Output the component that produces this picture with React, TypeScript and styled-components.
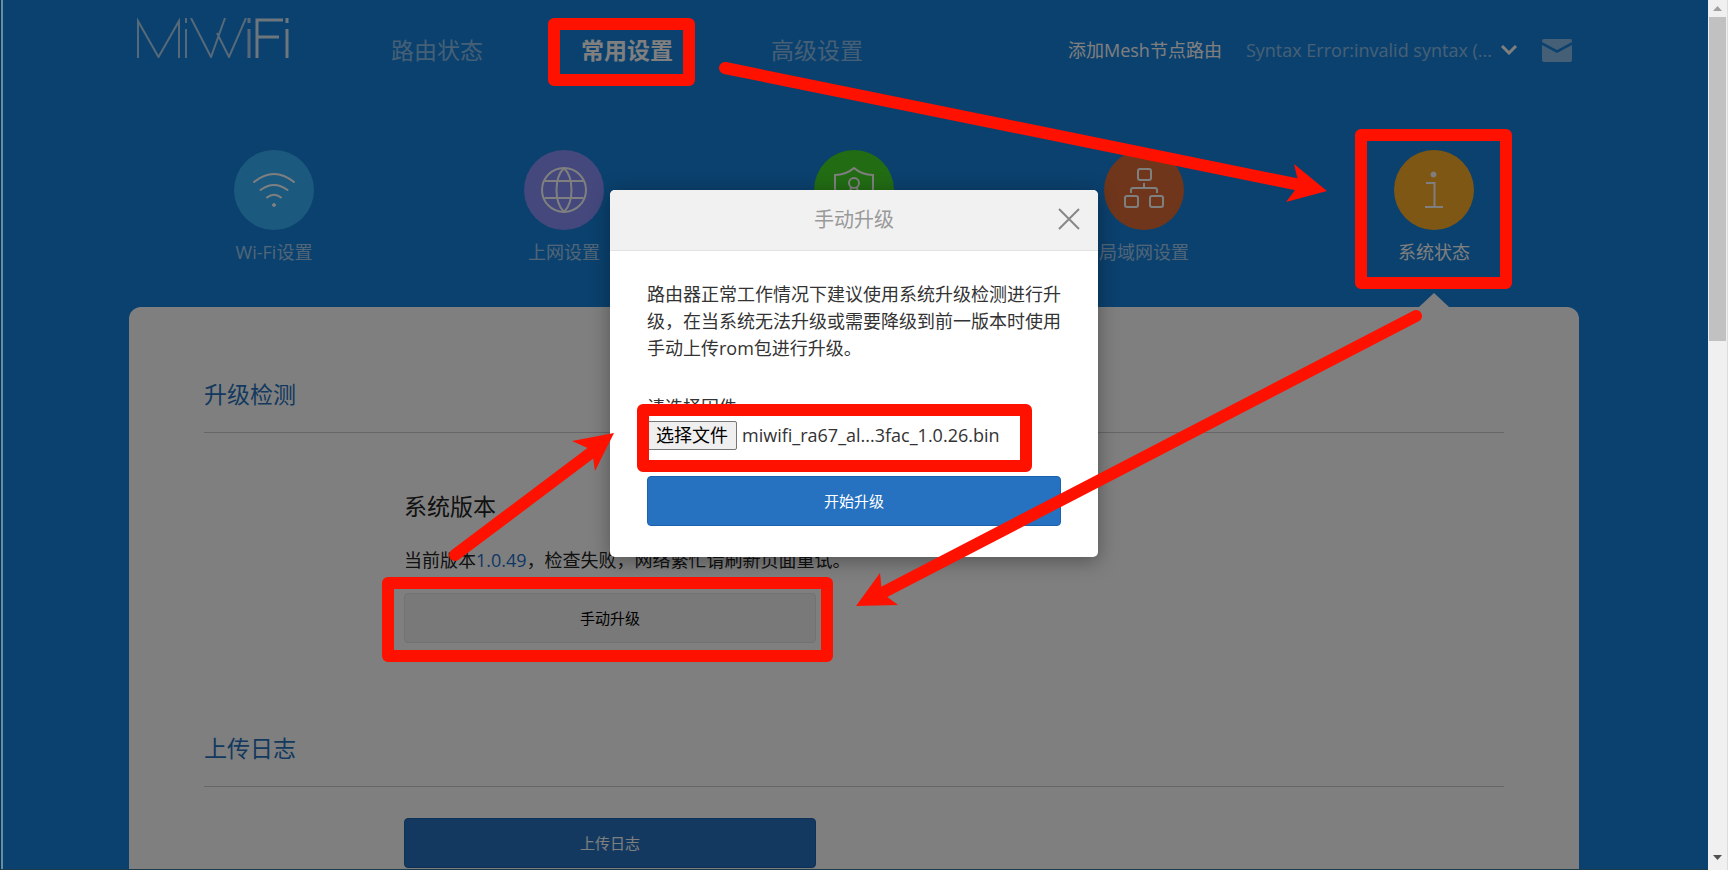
import React from 'react';
import styled, { createGlobalStyle } from 'styled-components';

const GlobalStyle = createGlobalStyle`
  * { box-sizing: border-box; }
  html, body { margin: 0; padding: 0; }
  body {
    background: #1682dc;
    color: #333;
    font-family: 'Open Sans', 'Noto Sans CJK SC', sans-serif;
    font-size: 18px;
    overflow: hidden;
  }
  button { font-family: inherit; cursor: pointer; }
  a { color: inherit; text-decoration: none; }
  h1, h2, h3, p { margin: 0; font-weight: 400; }
`;

const Window = styled.div`
  position: relative;
  display: flex;
  height: 100vh;
  overflow: hidden;
`;

const Viewport = styled.div`
  position: relative;
  flex: 1;
  min-width: 0;
  overflow: hidden;
  background: #1682dc;
`;

const Container = styled.div`
  width: 1450px;
  max-width: 100%;
  margin: 0 auto;
`;

const Header = styled.header`
  display: flex;
  align-items: center;
  height: 100px;
  padding: 0 7px 0 8px;
`;

const Logo = styled.a`
  display: block;
  height: 40px;
  margin-bottom: 24px;
`;

const Nav = styled.nav`
  display: flex;
  gap: 98px;
  margin-left: 100px;
`;

const NavLink = styled.a<{ $active?: boolean }>`
  font-size: 23px;
  line-height: 32px;
  white-space: nowrap;
  font-weight: ${p => (p.$active ? 700 : 400)};
  color: ${p => (p.$active ? '#fff' : 'rgba(255, 255, 255, 0.5)')};
`;

const Account = styled.div`
  display: flex;
  align-items: center;
  margin-left: auto;
  white-space: nowrap;
  line-height: 26px;
  color: #fff;
`;

const RouterButton = styled.button`
  display: flex;
  align-items: center;
  gap: 9px;
  margin: 0 25px 0 24px;
  padding: 0;
  border: 0;
  background: none;
  font-size: 18px;
  line-height: 26px;
  color: #fff;

  span { opacity: 0.5; }
`;

const MailLink = styled.a`
  display: flex;
`;

const Sections = styled.nav`
  display: grid;
  grid-template-columns: repeat(5, 1fr);
  margin-top: 50px;
`;

const SectionLink = styled.a<{ $active?: boolean }>`
  position: relative;
  display: flex;
  flex-direction: column;
  align-items: center;
  gap: 9px;
  height: 157px;
  line-height: 26px;
  color: ${p => (p.$active ? '#fff' : 'rgba(255, 255, 255, 0.6)')};

  &::after {
    content: '';
    display: ${p => (p.$active ? 'block' : 'none')};
    position: absolute;
    bottom: 0;
    border: 15px solid transparent;
    border-top-width: 0;
    border-bottom: 14px solid #fff;
  }
`;

const Disc = styled.span<{ $color: string }>`
  display: flex;
  width: 80px;
  height: 80px;
  border-radius: 50%;
  background: ${p => p.$color};
`;

const Panel = styled.main`
  padding: 67px 75px 80px;
  min-height: 900px;
  border-radius: 12px;
  background: #fff;
`;

const PanelSection = styled.section`
  margin-bottom: 85px;
`;

const SectionTitle = styled.h2`
  padding-bottom: 18px;
  border-bottom: 1px solid #ccc;
  font-size: 23px;
  line-height: 40px;
  color: #2672c0;
`;

const SectionBody = styled.div<{ $top: number }>`
  width: 412px;
  margin: ${p => p.$top}px 0 0 200px;
`;

const Subtitle = styled.h3`
  font-size: 23px;
  line-height: 32px;
  color: #222;
`;

const VersionLine = styled.p`
  margin: 25px 0 20px;
  line-height: 26px;
  white-space: nowrap;
  color: #222;

  b { font-weight: 400; color: #1c6fc8; }
`;

const Button = styled.button<{ $primary?: boolean }>`
  display: block;
  width: 100%;
  height: 50px;
  padding: 0;
  border: 1px solid ${p => (p.$primary ? '#1b62ae' : '#e4e4e4')};
  border-radius: 4px;
  background: ${p => (p.$primary ? '#2672c0' : '#f2f2f2')};
  font-size: 15px;
  line-height: 24px;
  color: ${p => (p.$primary ? '#fff' : '#000')};
`;

const Backdrop = styled.div`
  position: absolute;
  inset: 0;
  background: rgba(0, 0, 0, 0.5);
`;

const Dialog = styled.div`
  width: 488px;
  margin: 190px auto 0;
  border-radius: 5px;
  overflow: hidden;
  background: #fff;
  box-shadow: 0 4px 20px rgba(0, 0, 0, 0.35);
`;

const DialogHeader = styled.div`
  display: grid;
  grid-template-columns: 24px 1fr 24px;
  align-items: center;
  height: 61px;
  padding: 0 17px;
  border-bottom: 1px solid #e2e2e2;
  background: #f1f1f1;

  h2 {
    grid-column: 2;
    text-align: center;
    font-size: 20px;
    line-height: 28px;
    color: #999;
  }
`;

const CloseButton = styled.button`
  display: flex;
  padding: 0;
  border: 0;
  background: none;
`;

const DialogBody = styled.form`
  padding: 30px 37px 31px;
  line-height: 27px;
  color: #333;
`;

const FileField = styled.div`
  margin: 32px 0 26px;
`;

const FilePicker = styled.label`
  position: relative;
  display: flex;
  align-items: center;
  gap: 5px;
  line-height: 27px;
  white-space: nowrap;

  input {
    position: absolute;
    inset: 0;
    width: 100%;
    opacity: 0;
  }
`;

const FileButton = styled.span`
  padding: 0 8px;
  border: 1px solid #767676;
  border-radius: 2px;
  background: #efefef;
  color: #000;
`;

const Annotations = styled.svg`
  position: absolute;
  top: 0;
  left: 50%;
  margin-left: -854px;
  overflow: visible;
  pointer-events: none;
`;

const WindowEdge = styled.div`
  position: absolute;
  inset: 0 auto 0 0;
  width: 3px;
  border-left: 1px solid #14303c;
  background: #5c8fb0;
`;

const WindowFoot = styled.div`
  position: absolute;
  inset: auto 0 0 0;
  height: 1px;
  background: #1c3c4c;
`;

const Scrollbar = styled.div`
  display: flex;
  flex-direction: column;
  align-items: center;
  width: 20px;
  border-right: 1px solid #dcdcdc;
  background: #f0f0f0;
`;

const ScrollArrow = styled.span<{ $down?: boolean }>`
  display: flex;
  align-items: center;
  justify-content: center;
  height: 17px;
  margin-top: ${p => (p.$down ? 'auto' : '0')};
  margin-bottom: ${p => (p.$down ? '4px' : '0')};
`;

const ScrollThumb = styled.span`
  width: 17px;
  height: 324px;
  background: #c1c1c1;
`;

const line = { fill: 'none', stroke: '#fff', strokeWidth: 2 } as const;

const icons: Record<string, React.ReactNode> = {
  wifi: (
    <g {...line} strokeLinecap="round">
      <path d="M20 32Q40 16 60 32M26.500 40Q40 30 53.500 40M33 47.500Q40 42 47 47.500" />
      <circle cx="40" cy="55" r="1.500" fill="#fff" strokeWidth="1" />
    </g>
  ),
  globe: (
    <g {...line}>
      <circle cx="40" cy="40" r="22" />
      <path d="M40 18C30 28 30 52 40 62M40 18C50 28 50 52 40 62M20.500 31H59.500M20.500 48H59.500" />
    </g>
  ),
  shield: (
    <g {...line}>
      <path d="M40 18Q48 25 59 25V40Q58 55 40 62Q22 55 21 40V25Q32 25 40 18Z" />
      <circle cx="40" cy="33" r="5" />
      <path d="M37 37L35 48H45L43 37" />
    </g>
  ),
  network: (
    <g {...line}>
      <rect x="34" y="19" width="13" height="11" rx="2" />
      <rect x="21" y="46" width="13" height="11" rx="2" />
      <rect x="46" y="46" width="13" height="11" rx="2" />
      <path d="M40 33V38M27 43V40Q27 38 29 38H51Q53 38 53 40V43" />
    </g>
  ),
  info: (
    <g {...line}>
      <circle cx="39.500" cy="24.500" r="2.500" fill="#fff" strokeWidth="1" />
      <path d="M32 33H40.500V57M31 57H49" />
    </g>
  ),
};

const sections = [
  { icon: 'wifi', label: 'Wi-Fi设置', color: '#38b2fe' },
  { icon: 'globe', label: '上网设置', color: '#8890fa' },
  { icon: 'shield', label: '防火墙', color: '#44d828' },
  { icon: 'network', label: '局域网设置', color: '#de6c38' },
  { icon: 'info', label: '系统状态', color: '#ffae28', active: true },
];

export default function App() {
  return (
    <Window>
      <GlobalStyle />
      <Viewport>
        <Container>
          <Header>
            <Logo href="#" aria-label="MiWiFi">
              <svg width="154" height="40" viewBox="0 0 154 40" fill="none" stroke="#fff" strokeWidth="3">
                <g opacity="0.65">
                  <path d="M1 40V3L21.500 39L42 3V40M49 11V40M49 0V5M54 0L74 39L88 0M80 15L92 39L109 0" strokeWidth="2" />
                  <path d="M112 11V40M112 0V5" />
                </g>
                <path d="M120 40V2H146M120 19H142M150 11V40M150 0V5" opacity="0.85" />
              </svg>
            </Logo>
            <Nav>
              <NavLink href="#">路由状态</NavLink>
              <NavLink href="#" $active>常用设置</NavLink>
              <NavLink href="#">高级设置</NavLink>
            </Nav>
            <Account>
              <a href="#">添加Mesh节点路由</a>
              <RouterButton type="button">
                <span>Syntax Error:invalid syntax (...</span>
                <svg width="16" height="10" viewBox="0 0 16 10" fill="none" stroke="#fff" strokeWidth="3">
                  <path d="M1 1L8 8L15 1" />
                </svg>
              </RouterButton>
              <MailLink href="#" aria-label="消息">
                <svg width="30" height="23" viewBox="0 0 30 23" opacity="0.5">
                  <path d="M0 2Q0 0 2 0H28Q30 0 30 2V3L15 11L0 3ZM0 6L15 14L30 6V21Q30 23 28 23H2Q0 23 0 21Z" fill="#fff" />
                </svg>
              </MailLink>
            </Account>
          </Header>

          <Sections>
            {sections.map(s => (
              <SectionLink key={s.icon} href="#" $active={s.active}>
                <Disc $color={s.color}>
                  <svg width="80" height="80" viewBox="0 0 80 80">{icons[s.icon]}</svg>
                </Disc>
                {s.label}
              </SectionLink>
            ))}
          </Sections>

          <Panel>
            <PanelSection>
              <SectionTitle>升级检测</SectionTitle>
              <SectionBody $top={57}>
                <Subtitle>系统版本</Subtitle>
                <VersionLine>
                  当前版本<b>1.0.49</b>，检查失败，网络繁忙请刷新页面重试。
                </VersionLine>
                <Button type="button">手动升级</Button>
              </SectionBody>
            </PanelSection>
            <PanelSection>
              <SectionTitle>上传日志</SectionTitle>
              <SectionBody $top={31}>
                <Button type="button" $primary>上传日志</Button>
              </SectionBody>
            </PanelSection>
          </Panel>
        </Container>

        <Backdrop>
          <Dialog role="dialog" aria-labelledby="dialog-title">
            <DialogHeader>
              <h2 id="dialog-title">手动升级</h2>
              <CloseButton type="button" aria-label="关闭">
                <svg width="24" height="24" viewBox="0 0 24 24" stroke="#888" strokeWidth="2">
                  <path d="M2 1L22 21M22 1L2 21" />
                </svg>
              </CloseButton>
            </DialogHeader>
            <DialogBody onSubmit={e => e.preventDefault()}>
              <p>路由器正常工作情况下建议使用系统升级检测进行升级，在当系统无法升级或需要降级到前一版本时使用手动上传rom包进行升级。</p>
              <FileField>
                <p>请选择固件</p>
                <FilePicker>
                  <FileButton>选择文件</FileButton>
                  <span>miwifi_ra67_al...3fac_1.0.26.bin</span>
                  <input type="file" />
                </FilePicker>
              </FileField>
              <Button type="submit" $primary>开始升级</Button>
            </DialogBody>
          </Dialog>
        </Backdrop>

        <Annotations width="1708" height="870" viewBox="0 0 1708 870" aria-hidden="true">
          <g fill="none" stroke="#ff1100" strokeWidth="12" strokeLinejoin="round">
            <rect x="554" y="24" width="135" height="56" />
            <rect x="1361" y="135" width="145" height="148" />
            <rect x="643" y="410" width="383" height="56" />
            <rect x="388" y="583" width="439" height="73" />
            <path d="M725 68L1300 185M1416 316L884 592M455 555L600 446" strokeLinecap="round" />
          </g>
          <g fill="#ff1100">
            <path d="M1327 191L1294 164L1299 185L1286 202Z" />
            <path d="M856 606L880 573L882 593L898 605Z" />
            <path d="M614 433L572 441L592 450L595 471Z" />
          </g>
        </Annotations>
        <WindowEdge />
        <WindowFoot />
      </Viewport>

      <Scrollbar aria-hidden="true">
        <ScrollArrow>
          <svg width="9" height="5"><path d="M0 5L4.500 0L9 5Z" fill="#a0a0a0" /></svg>
        </ScrollArrow>
        <ScrollThumb />
        <ScrollArrow $down>
          <svg width="9" height="5"><path d="M0 0L4.500 5L9 0Z" fill="#505050" /></svg>
        </ScrollArrow>
      </Scrollbar>
    </Window>
  );
}
